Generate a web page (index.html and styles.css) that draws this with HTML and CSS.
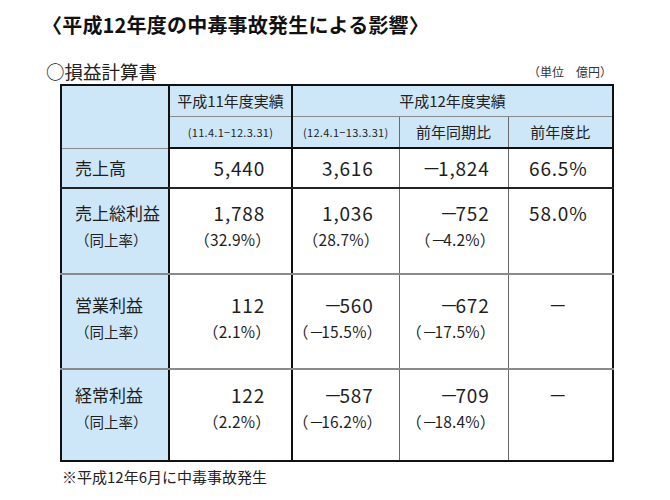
FILE: index.html
```html
<!DOCTYPE html>
<html lang="ja">
<head>
<meta charset="utf-8">
<link rel="stylesheet" href="styles.css">
</head>
<body>
<div class="page">
  <h1 class="title">〈平成12年度の中毒事故発生による影響〉</h1>
  <div class="subhead">
    <span class="subtitle">○損益計算書</span>
    <span class="unit">（単位　億円）</span>
  </div>
  <table class="pl">
    <colgroup>
      <col class="c1"><col class="c2"><col class="c3"><col class="c4"><col class="c5">
    </colgroup>
    <thead>
      <tr class="h1">
        <th class="blank" rowspan="2"></th>
        <th class="hd vsep">平成11年度実績</th>
        <th class="hd" colspan="3">平成12年度実績</th>
      </tr>
      <tr class="h2">
        <th class="date vsep">(11.4.1−12.3.31)</th>
        <th class="date thin">(12.4.1−13.3.31)</th>
        <th class="hd thin">前年同期比</th>
        <th class="hd">前年度比</th>
      </tr>
    </thead>
    <tbody>
      <tr class="r-sales">
        <td class="lab">売上高</td>
        <td class="num n2 vsep">5,440</td>
        <td class="num n3 thin">3,616</td>
        <td class="num n4 thin"><span class="mn">－</span>1,824</td>
        <td class="ctr">66.5%</td>
      </tr>
      <tr class="r-gross">
        <td class="lab">売上総利益<span class="sub">（同上率）</span></td>
        <td class="num n2 vsep">1,788<span class="pct">（32.9%）</span></td>
        <td class="num n3 thin">1,036<span class="pct">（28.7%）</span></td>
        <td class="num n4 thin"><span class="mn">－</span>752<span class="pct">（<span class="mn">－</span>4.2%）</span></td>
        <td class="ctr">58.0%</td>
      </tr>
      <tr class="r-op">
        <td class="lab">営業利益<span class="sub">（同上率）</span></td>
        <td class="num n2 vsep">112<span class="pct">（2.1%）</span></td>
        <td class="num n3 thin"><span class="mn">－</span>560<span class="pct">（<span class="mn">－</span>15.5%）</span></td>
        <td class="num n4 thin"><span class="mn">－</span>672<span class="pct">（<span class="mn">－</span>17.5%）</span></td>
        <td class="ctr">－</td>
      </tr>
      <tr class="r-ord">
        <td class="lab">経常利益<span class="sub">（同上率）</span></td>
        <td class="num n2 vsep">122<span class="pct">（2.2%）</span></td>
        <td class="num n3 thin"><span class="mn">－</span>587<span class="pct">（<span class="mn">－</span>16.2%）</span></td>
        <td class="num n4 thin"><span class="mn">－</span>709<span class="pct">（<span class="mn">－</span>18.4%）</span></td>
        <td class="ctr">－</td>
      </tr>
    </tbody>
  </table>
  <p class="note">※平成12年6月に中毒事故発生</p>
</div>
</body>
</html>
```
FILE: styles.css
```css
html, body {
  margin: 0;
  padding: 0;
  background: #ffffff;
}
body {
  font-family: "Noto Sans CJK JP", "Noto Sans", sans-serif;
  color: #1e1e1e;
}
.page {
  width: 670px;
  height: 500px;
  overflow: hidden;
}
.title {
  margin: 0;
  padding: 11px 0 0 42px;
  font-size: 20px;
  line-height: 28px;
  font-weight: bold;
  letter-spacing: 0.2px;
  color: #111;
}
.subhead {
  display: flex;
  justify-content: space-between;
  align-items: flex-end;
  width: 566px;
  margin: 19px 0 0 46px;
  height: 24px;
}
.subtitle {
  font-size: 18.5px;
  line-height: 22px;
  color: #222;
}
.unit {
  font-size: 12px;
  line-height: 16px;
  color: #333;
  padding-bottom: 2px;
}
.pl {
  margin: 2px 0 0 60px;
  border-collapse: collapse;
  table-layout: fixed;
  width: 554px;
  border: 2px solid #111;
}
.c1 { width: 108px; }
.c2 { width: 123px; }
.c3 { width: 107px; }
.c4 { width: 109px; }
.c5 { width: 105px; }
.pl th, .pl td {
  padding: 0;
  white-space: nowrap;
}
.pl thead th {
  background: #cde7f8;
  font-weight: normal;
  text-align: center;
  color: #222;
}
.blank {
  border-right: 2px solid #111;
  border-bottom: 2px solid #111;
}
.h1 th { height: 30px; border-bottom: 1px solid #8a8a8a; }
.h2 th { height: 30px; border-bottom: 2px solid #111; }
.hd {
  font-size: 15px;
  line-height: 20px;
}
.date {
  font-size: 11px;
  line-height: 14px;
  letter-spacing: 0.3px;
}
.vsep { border-right: 2px solid #111; }
.thin { border-right: 1px solid #6a6a6a; }
.pl td {
  vertical-align: top;
  font-size: 19px;
  line-height: 26px;
  letter-spacing: 0.8px;
  color: #1e1e1e;
}
.mn {
  letter-spacing: -3px;
}
.pl td.lab {
  background: #cde7f8;
  border-right: 2px solid #111;
  font-size: 17px;
  padding-left: 13px;
  letter-spacing: 0;
}
.sub {
  display: block;
  font-size: 14.5px;
  line-height: 27px;
}
.num { text-align: right; }
.n2 { padding-right: 26px !important; }
.n3 { padding-right: 25px !important; }
.n4 { padding-right: 18px !important; }
.ctr { text-align: center; padding-right: 4px !important; }
.pct {
  display: block;
  white-space: nowrap;
  font-size: 15.5px;
  line-height: 27px;
  letter-spacing: 0.2px;
  margin-right: -6px;
}
.r-sales td {
  height: 38px;
  vertical-align: middle;
  border-bottom: 2px solid #222;
}
.r-gross td {
  height: 86px;
  padding-top: 11px !important;
  border-bottom: 2px solid #8a8a8a;
}
.r-op td {
  height: 95px;
  padding-top: 17px !important;
  border-bottom: 2px solid #8a8a8a;
}
.r-ord td {
  height: 92px;
  padding-top: 12px !important;
}
.r-gross td, .r-op td, .r-ord td { box-sizing: border-box; }
.note {
  margin: 4px 0 0 62px;
  font-size: 15px;
  line-height: 22px;
  color: #222;
}
```
